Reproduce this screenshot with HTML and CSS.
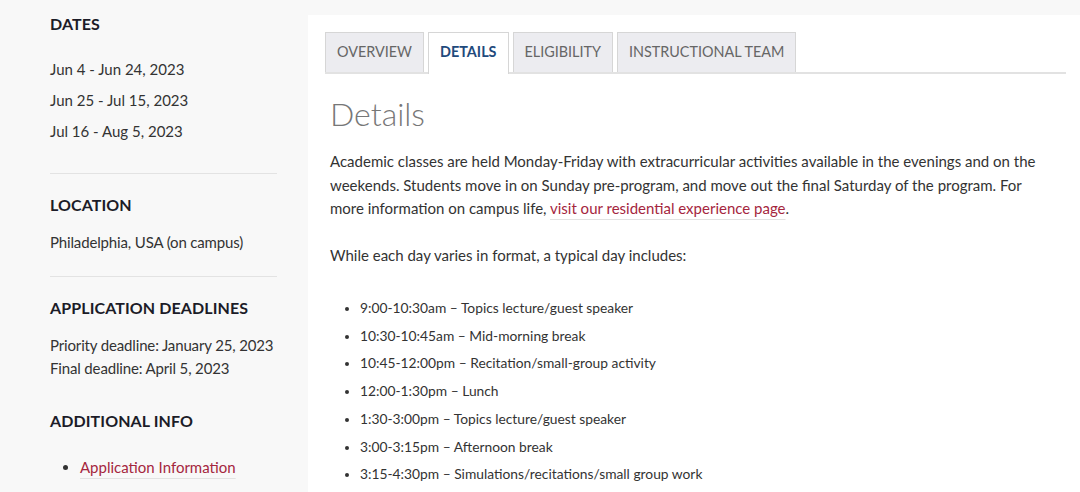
FILE: index.html
```html
<!DOCTYPE html>
<html lang="en">
<head>
<meta charset="utf-8">
<title>Program details</title>
<link rel="stylesheet" href="styles.css">
</head>
<body>
<div class="page">
  <aside class="sidebar">
    <section class="side-block">
      <h3 class="side-title">DATES</h3>
      <ul class="date-list">
        <li>Jun 4 - Jun 24, 2023</li>
        <li>Jun 25 - Jul 15, 2023</li>
        <li>Jul 16 - Aug 5, 2023</li>
      </ul>
    </section>
    <hr class="divider">
    <section class="side-block">
      <h3 class="side-title">LOCATION</h3>
      <p class="side-text">Philadelphia, USA (on campus)</p>
    </section>
    <hr class="divider divider-tight">
    <section class="side-block">
      <h3 class="side-title">APPLICATION DEADLINES</h3>
      <p class="side-text deadlines">Priority deadline: January 25, 2023<br>Final deadline: April 5, 2023</p>
    </section>
    <section class="side-block">
      <h3 class="side-title">ADDITIONAL INFO</h3>
      <ul class="info-list">
        <li><a href="#" class="link">Application Information</a></li>
      </ul>
    </section>
  </aside>
  <main class="content">
    <nav class="tabs">
      <a href="#" class="tab">OVERVIEW</a>
      <a href="#" class="tab active">DETAILS</a>
      <a href="#" class="tab">ELIGIBILITY</a>
      <a href="#" class="tab">INSTRUCTIONAL TEAM</a>
    </nav>
    <article class="panel">
      <h1 class="panel-title">Details</h1>
      <p class="para">Academic classes are held Monday-Friday with extracurricular activities available in the evenings and on the weekends. Students move in on Sunday pre-program, and move out the final Saturday of the program. For more information on campus life, <a href="#" class="link">visit our residential experience page</a>.</p>
      <p class="para">While each day varies in format, a typical day includes:</p>
      <ul class="schedule">
        <li>9:00-10:30am – Topics lecture/guest speaker</li>
        <li>10:30-10:45am – Mid-morning break</li>
        <li>10:45-12:00pm – Recitation/small-group activity</li>
        <li>12:00-1:30pm – Lunch</li>
        <li>1:30-3:00pm – Topics lecture/guest speaker</li>
        <li>3:00-3:15pm – Afternoon break</li>
        <li>3:15-4:30pm – Simulations/recitations/small group work</li>
      </ul>
    </article>
  </main>
</div>
</body>
</html>
```
FILE: styles.css
```css
* { box-sizing: border-box; }
html, body { margin: 0; padding: 0; }
body {
  background: #f8f8f8;
  font-family: "Lato", "Open Sans", sans-serif;
  color: #333;
  height: 492px;
  overflow: hidden;
}
.page {
  display: flex;
  align-items: flex-start;
  height: 492px;
  overflow: hidden;
}
.sidebar {
  width: 308px;
  flex: 0 0 308px;
  padding: 14px 31px 0 50px;
}
.side-title {
  margin: 0;
  font-size: 16px;
  font-weight: 700;
  color: #1c1c28;
  line-height: 20px;
  letter-spacing: 0.1px;
}
.date-list {
  list-style: none;
  margin: 20px 0 0;
  padding: 0;
  font-size: 15px;
  line-height: 31px;
  color: #333;
}
.divider {
  border: 0;
  border-top: 1px solid #e3e3e3;
  margin: 26px 0 21px;
}
.divider-tight { margin-top: 22px; }
.side-text {
  margin: 16px 0 0;
  font-size: 15px;
  line-height: 23px;
  color: #333;
  letter-spacing: -0.15px;
  white-space: nowrap;
}
.deadlines { margin-top: 16px; }
.side-block + .side-block { margin-top: 31px; }
.info-list {
  margin: 25px 0 0;
  padding-left: 30px;
  font-size: 15px;
  line-height: 23px;
}
.link {
  color: #a5263e;
  text-decoration: underline;
  text-decoration-color: #e2e2e2;
  text-decoration-thickness: 1px;
  text-underline-offset: 5px;
}
.content {
  flex: 1;
  margin-top: 15px;
  background: #fff;
  padding: 17px 14px 0 17px;
  height: 477px;
  overflow: hidden;
}
.tabs {
  display: flex;
  gap: 4px;
  border-bottom: 2px solid #e2e2e2;
}
.tab {
  display: block;
  height: 40px;
  padding: 0 11px;
  line-height: 38px;
  font-size: 14.4px;
  color: #666;
  text-decoration: none;
  background: #ececf0;
  border: 1px solid #d6d6d6;
  border-bottom: 0;
  margin-bottom: -2px;
}
.tab.active {
  background: #fff;
  color: #1f4a7c;
  font-weight: 700;
  height: 42px;
}
.panel {
  padding: 0 22px 0 5px;
}
.panel-title {
  margin: 20px 0 0;
  font-size: 32px;
  font-weight: 300;
  color: #777;
  line-height: 40px;
}
.para {
  margin: 16px 0 0;
  font-size: 15px;
  line-height: 23.5px;
  color: #333;
}
.para + .para { margin-top: 23px; }
.schedule {
  margin: 27px 0 0;
  padding-left: 30px;
  font-size: 13.8px;
  line-height: 27.7px;
  color: #333;
}
.schedule li::marker { font-size: 12px; }
```
